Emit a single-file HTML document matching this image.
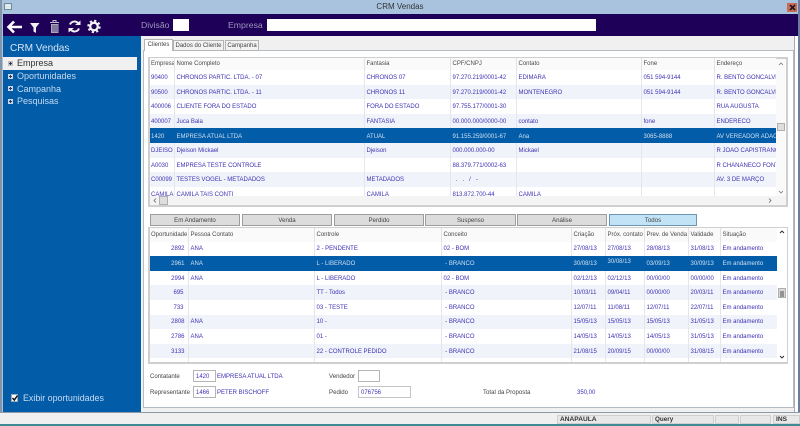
<!DOCTYPE html>
<html><head><meta charset="utf-8"><title>CRM Vendas</title>
<style>
*{box-sizing:border-box}
html,body{margin:0;padding:0;width:800px;height:426px;overflow:hidden;background:#f0f0f0;font-family:"Liberation Sans",sans-serif}
.a{position:absolute}
.t{position:absolute;white-space:nowrap;line-height:10px;height:10px}
table{border-collapse:collapse;table-layout:fixed;position:absolute;font-size:6px;color:#3d32b4}
td{padding:1px 0 0 2px;white-space:nowrap;overflow:hidden;height:14.6px;border-right:1px solid #e6e6ea;line-height:12px}
td:first-child{padding-left:1px}
td.r:first-child{padding-left:0;padding-right:3px}
tr.h td{color:#4a4a4a;background:#fafafa;border-right:1px solid #e2e2e2}
#g1 td{padding-top:2px}
#g1 tr.h td{height:12px;padding-top:1px;line-height:11px}
tr.o td{background:#f1f3fa}
tr.s td{background:#025ca8;color:#cfe0f2;border-right-color:#025ca8}
.r{text-align:right}
.lbl{font-size:6.1px;color:#444}
.v{font-size:6px;color:#3d32b4}
.box{position:absolute;background:#fff;border:1px solid #b5b5b5;font-size:6px;color:#3d32b4;line-height:12px;padding-left:2px;overflow:hidden}
.btn{position:absolute;top:214px;height:12px;background:#dcdcdc;border:1px solid #9d9d9d;font-size:6.1px;color:#444;text-align:center;line-height:12px}
.tab{position:absolute;top:40px;height:11px;background:#f2f2f2;border:1px solid #b4b4b4;font-size:6px;color:#444;line-height:10px;text-align:center}
.side{position:absolute;left:17px;font-size:9px;line-height:12px;color:#c5dbf2;white-space:nowrap}
.pm{position:absolute;left:8px;width:5px;height:5px;background:linear-gradient(#335,#335) center/3px 1px no-repeat,linear-gradient(#335,#335) center/1px 3px no-repeat,#c8d8ea}
.cell{position:absolute;top:415px;height:9px;background:#e8e8e8;border:1px solid #cfcfcf;font-size:6.6px;font-weight:bold;color:#333;line-height:8px;padding-left:2px}
.sb{position:absolute;background:#fafafa}
.th{position:absolute;background:#dedede;border:1px solid #b0b0b0}
</style></head><body>
<!-- title bar -->
<div class="a" style="left:0;top:0;width:800px;height:14px;background:#a9c3de"></div>
<div class="a" style="left:4px;top:3px;width:8px;height:7px;background:#dfe8ec;border:1px solid #6c8c96"></div>
<div class="t" style="left:360px;top:2px;width:80px;text-align:center;font-size:8px;color:#333">CRM Vendas</div>
<div class="a" style="left:787px;top:3px;width:10px;height:9px;background:#c86a55"></div>
<svg class="a" style="left:789px;top:4px" width="7" height="7"><path d="M1 1L6 6M6 1L1 6" stroke="#111" stroke-width="1.500"/></svg>
<!-- window edges -->
<div class="a" style="left:0;top:0;width:2px;height:412px;background:#8595a8"></div>
<div class="a" style="left:2px;top:14px;width:1px;height:398px;background:#a9c3de"></div>
<div class="a" style="left:798px;top:0;width:2px;height:412px;background:#6a7ca0"></div>
<!-- navy toolbar -->
<div class="a" style="left:3px;top:14px;width:795px;height:22px;background:#1e0058"></div>
<svg class="a" style="left:0;top:14px" width="110" height="22">
<path d="M22 13H9M14 7.500L8.500 13L14 18.500" fill="none" stroke="#fff" stroke-width="2.600"/>
<path d="M30 9H39.500L36 13.500V19L33.500 17.500V13.500Z" fill="#f0f0f0"/>
<path d="M50 8.500H59M53 8V6.500H56V8" fill="none" stroke="#bdbdc8" stroke-width="1"/>
<path d="M51 10H58.500V19H51Z" fill="#a9a9b8"/><path d="M53 11V18M55 11V18M57 11V18" stroke="#2a1060" stroke-width=".6"/>
<path d="M78.500 9.500C76 6.500 71.500 7 70 10.500M70.500 15.500C73 18.500 77.500 18 79 14.500" fill="none" stroke="#f0f0f0" stroke-width="2"/>
<path d="M75 11H80.500V6.500ZM74 14H68.500V18.500Z" fill="#f0f0f0"/>
<circle cx="94" cy="12.500" r="3.800" fill="none" stroke="#f2f2f2" stroke-width="2.300"/>
<circle cx="94" cy="12.500" r="5.700" fill="none" stroke="#f2f2f2" stroke-width="2" stroke-dasharray="2.200 2.270"/>
</svg>
<div class="t" style="left:141px;top:20px;font-size:8.700px;color:#9c98bd">Divisão</div>
<div class="a" style="left:173px;top:19px;width:16px;height:12px;background:#fff"></div>
<div class="t" style="left:228px;top:20px;font-size:8.700px;color:#9c98bd">Empresa</div>
<div class="a" style="left:267px;top:19px;width:329px;height:12px;background:#fff"></div>
<!-- sidebar -->
<div class="a" style="left:3px;top:36px;width:138px;height:376px;background:#025ca8"></div>
<div class="t" style="left:10px;top:43px;height:12px;line-height:12px;font-size:10.100px;color:#d4e4f5">CRM Vendas</div>
<div class="a" style="left:3px;top:57px;width:134px;height:13px;background:#f0f0f0"></div>
<div class="pm" style="top:61px;background-color:#c0c0c0"></div><div class="side" style="top:57px;color:#333">Empresa</div>
<div class="pm" style="top:74px"></div><div class="side" style="top:70px">Oportunidades</div>
<div class="pm" style="top:86px"></div><div class="side" style="top:83px">Campanha</div>
<div class="pm" style="top:99px"></div><div class="side" style="top:95px">Pesquisas</div>
<div class="a" style="left:11px;top:394px;width:7px;height:8px;background:#fff;border:1px solid #9ab"></div>
<svg class="a" style="left:11px;top:394px" width="8" height="8"><path d="M1.500 4L3.300 6L6.500 1.500" fill="none" stroke="#111" stroke-width="1.500"/></svg>
<div class="side" style="left:23px;top:392px;font-size:8.900px">Exibir oportunidades</div>
<!-- main -->
<div class="a" style="left:141px;top:36px;width:657px;height:376px;background:#f0f0f0"></div>
<div class="a" style="left:143px;top:50px;width:651px;height:358px;background:#fff;border:1px solid #b4bcc4"></div>
<div class="a" style="left:794px;top:36px;width:4px;height:376px;background:#fff;border-left:1px solid #aab"></div>
<div class="tab" style="left:144px;top:39px;width:29px;height:12px;background:#fff;border-bottom:0">Clientes</div>
<div class="tab" style="left:173px;width:51px">Dados do Cliente</div>
<div class="tab" style="left:225px;width:34px">Campanha</div>
<!-- grid 1 -->
<div class="a" style="left:148px;top:57px;width:640px;height:150px;background:#fff;border:2px solid #cfcfcf"></div>
<div class="a" style="left:150px;top:58px;width:626px;height:138px;overflow:hidden">
<table id="g1" style="left:0;top:0;width:626px"><colgroup><col style="width:24px"><col style="width:190px"><col style="width:86px"><col style="width:66px"><col style="width:125px"><col style="width:73px"><col style="width:62px"></colgroup>
<tr class="h"><td>Empresa</td><td>Nome Completo</td><td>Fantasia</td><td>CPF/CNPJ</td><td>Contato</td><td>Fone</td><td>Endereço</td></tr>
<tr><td>90400</td><td>CHRONOS PARTIC. LTDA. - 07</td><td>CHRONOS 07</td><td>97.270.219/0001-42</td><td>EDIMARA</td><td>051 594-9144</td><td>R. BENTO GONCALVES</td></tr>
<tr class="o"><td>90500</td><td>CHRONOS PARTIC. LTDA. - 11</td><td>CHRONOS 11</td><td>97.270.219/0001-42</td><td>MONTENEGRO</td><td>051 594-9144</td><td>R. BENTO GONCALVES</td></tr>
<tr><td>400006</td><td>CLIENTE FORA DO ESTADO</td><td>FORA DO ESTADO</td><td>97.755.177/0001-30</td><td></td><td></td><td>RUA AUGUSTA</td></tr>
<tr class="o"><td>400007</td><td>Juca Bala</td><td>FANTASIA</td><td>00.000.000/0000-00</td><td>contato</td><td>fone</td><td>ENDERECO</td></tr>
<tr class="s"><td>1420</td><td>EMPRESA ATUAL LTDA</td><td>ATUAL</td><td>91.155.259/0001-67</td><td>Ana</td><td>3065-8888</td><td>AV VEREADOR ADAO R</td></tr>
<tr class="o"><td>DJEISO</td><td>Djeison Mickael</td><td>Djeison</td><td>000.000.000-00</td><td>Mickael</td><td></td><td>R JOAO CAPISTRANO</td></tr>
<tr><td>A0030</td><td>EMPRESA TESTE CONTROLE</td><td></td><td>88.379.771/0002-63</td><td></td><td></td><td>R CHANANECO FONTO</td></tr>
<tr class="o"><td>C00099</td><td>TESTES VOGEL - METADADOS</td><td>METADADOS</td><td>&nbsp; .&nbsp; &nbsp;.&nbsp; &nbsp;/&nbsp; &nbsp;-</td><td></td><td></td><td>AV. 3 DE MARÇO</td></tr>
<tr><td>CAMILA</td><td>CAMILA TAIS CONTI</td><td>CAMILA</td><td>813.872.700-44</td><td>CAMILA</td><td></td><td></td></tr>
</table></div>
<div class="sb" style="left:776px;top:59px;width:10px;height:137px"></div>
<div class="th" style="left:777px;top:123px;width:8px;height:8px"></div>
<svg class="a" style="left:776px;top:60px" width="10" height="136"><path d="M3 5L5 3L7 5M3 131L5 133L7 131" fill="none" stroke="#777" stroke-width=".8"/></svg>
<div class="sb" style="left:150px;top:196px;width:636px;height:9px;background:#f4f4f4"></div>
<div class="th" style="left:159px;top:196px;width:9px;height:9px"></div>
<svg class="a" style="left:150px;top:196px" width="636" height="9"><path d="M6 2.500L4 4.500L6 6.500M619 2.500L621 4.500L619 6.500" fill="none" stroke="#666" stroke-width=".8"/></svg>
<!-- buttons -->
<div class="btn" style="left:150px;width:90px">Em Andamento</div>
<div class="btn" style="left:242px;width:90px">Venda</div>
<div class="btn" style="left:334px;width:90px">Perdido</div>
<div class="btn" style="left:425px;width:91px">Suspenso</div>
<div class="btn" style="left:517px;width:90px">Análise</div>
<div class="btn" style="left:609px;width:88px;background:#c2e2f6;border-color:#6b97b5">Todos</div>
<!-- grid 2 -->
<div class="a" style="left:148px;top:227px;width:640px;height:137px;background:#fff;border:2px solid #cfcfcf;border-top:1px solid #cfcfcf;border-right:1px solid #cfcfcf"></div>
<div class="a" style="left:150px;top:228px;width:627px;height:134px;overflow:hidden">
<table style="left:0;top:-1px;width:627px"><colgroup><col style="width:38px"><col style="width:126px"><col style="width:127px"><col style="width:130px"><col style="width:34px"><col style="width:39px"><col style="width:44px"><col style="width:32px"><col style="width:57px"></colgroup>
<tr class="h"><td>Oportunidade</td><td>Pessoa Contato</td><td>Controle</td><td>Conceito</td><td>Criação</td><td>Próx. contato</td><td>Prev. de Venda</td><td>Validade</td><td>Situação</td></tr>
<tr><td class="r">2892</td><td>ANA</td><td>2 - PENDENTE</td><td>02 - BOM</td><td>27/08/13</td><td>27/08/13</td><td>28/08/13</td><td>31/08/13</td><td>Em andamento</td></tr>
<tr class="s"><td class="r">2961</td><td>ANA</td><td>L - LIBERADO</td><td>&nbsp;- BRANCO</td><td>30/08/13</td><td><span style="position:relative;top:-2px">30/08/13</span></td><td>03/09/13</td><td>30/09/13</td><td>Em andamento</td></tr>
<tr><td class="r">2994</td><td>ANA</td><td>L - LIBERADO</td><td>02 - BOM</td><td>02/12/13</td><td>02/12/13</td><td>00/00/00</td><td>00/00/00</td><td>Em andamento</td></tr>
<tr class="o"><td class="r" style="padding-right:4px">695</td><td></td><td>TT - Todos</td><td>&nbsp;- BRANCO</td><td>10/03/11</td><td>09/04/11</td><td>00/00/00</td><td>20/03/11</td><td>Em andamento</td></tr>
<tr><td class="r" style="padding-right:4px">733</td><td></td><td>03 - TESTE</td><td>&nbsp;- BRANCO</td><td>12/07/11</td><td>11/08/11</td><td>12/07/11</td><td>22/07/11</td><td>Em andamento</td></tr>
<tr class="o"><td class="r">2808</td><td>ANA</td><td>10 -</td><td>&nbsp;- BRANCO</td><td>15/05/13</td><td>15/05/13</td><td>15/05/13</td><td>31/05/13</td><td>Em andamento</td></tr>
<tr><td class="r">2786</td><td>ANA</td><td>01 -</td><td>&nbsp;- BRANCO</td><td>14/05/13</td><td>14/05/13</td><td>14/05/13</td><td>31/05/13</td><td>Em andamento</td></tr>
<tr class="o"><td class="r">3133</td><td></td><td>22 - CONTROLE PEDIDO</td><td>&nbsp;- BRANCO</td><td>21/08/15</td><td>20/09/15</td><td>00/00/00</td><td>31/08/15</td><td>Em andamento</td></tr>
<tr><td></td><td></td><td></td><td></td><td></td><td></td><td></td><td></td><td></td></tr>
</table></div>
<div class="sb" style="left:777px;top:228px;width:10px;height:134px;background:#fff"></div>
<div class="th" style="left:778px;top:288px;width:8px;height:10px;background:#d8d8d8"></div>
<svg class="a" style="left:777px;top:228px" width="10" height="134"><path d="M3 5L5 3L7 5M3 128L5 130L7 128" fill="none" stroke="#222" stroke-width=".9"/><path d="M3 64H7M3 66H7M3 68H7" stroke="#222" stroke-width=".8"/></svg>
<!-- form -->
<div class="t lbl" style="left:150px;top:372px">Contatante</div>
<div class="box" style="left:193px;top:370px;width:23px;height:12px">1420</div>
<div class="t v" style="left:217px;top:372px">EMPRESA ATUAL LTDA</div>
<div class="t lbl" style="left:329px;top:372px">Vendedor</div>
<div class="box" style="left:358px;top:370px;width:22px;height:12px"></div>
<div class="t lbl" style="left:150px;top:388px">Representante</div>
<div class="box" style="left:193px;top:386px;width:23px;height:12px">1466</div>
<div class="t v" style="left:217px;top:388px">PETER BISCHOFF</div>
<div class="t lbl" style="left:329px;top:388px">Pedido</div>
<div class="box" style="left:358px;top:386px;width:53px;height:12px;border-color:#c4c4c4">076756</div>
<div class="t lbl" style="left:483px;top:388px">Total da Proposta</div>
<div class="t v" style="left:577px;top:388px">350,00</div>
<!-- status -->
<div class="a" style="left:0;top:412px;width:800px;height:12px;background:#f0f0f0;border-top:1px solid #8a9aa8"></div>
<div class="cell" style="left:557px;width:94px">ANAPAULA</div>
<div class="cell" style="left:652px;width:62px;font-size:6.300px">Query</div>
<div class="cell" style="left:715px;width:24px"></div>
<div class="cell" style="left:740px;width:31px"></div>
<div class="cell" style="left:773px;width:27px">INS</div>
<div class="a" style="left:0;top:424px;width:800px;height:2px;background:#3f8a94"></div>
</body></html>
